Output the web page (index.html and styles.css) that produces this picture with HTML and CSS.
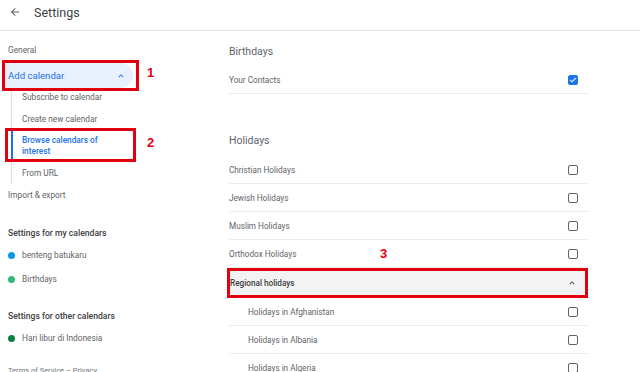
FILE: index.html
```html
<!DOCTYPE html>
<html>
<head>
<meta charset="utf-8">
<link rel="stylesheet" href="styles.css">
</head>
<body>
<header class="topbar">
  <svg class="back" width="12" height="12" viewBox="0 0 24 24"><path d="M20 11H7.83l5.59-5.59L12 4l-8 8 8 8 1.41-1.41L7.83 13H20v-2z" fill="#5f6368"/></svg>
  <span class="title">Settings</span>
</header>
<div class="main">
  <nav class="sidebar">
    <div class="nav-item">General</div>
    <div class="nav-group">
      <div class="nav-item active-group">
        <span>Add calendar</span>
        <svg class="chev" width="10" height="10" viewBox="0 0 24 24"><path d="M7.41 15.41L12 10.83l4.59 4.58L18 14l-6-6-6 6z" fill="#1a73e8"/></svg>
        <div class="annot box1"></div>
        <span class="num n1">1</span>
      </div>
      <div class="sub-list">
        <div class="sub-item">Subscribe to calendar</div>
        <div class="sub-item">Create new calendar</div>
        <div class="sub-item current">Browse calendars of<br>interest
          <div class="annot box2"></div>
          <span class="num n2">2</span>
        </div>
        <div class="sub-item">From URL</div>
      </div>
    </div>
    <div class="nav-item">Import &amp; export</div>
    <div class="nav-head first">Settings for my calendars</div>
    <div class="cal-item"><span class="dot" style="background:#039be5"></span>benteng batukaru</div>
    <div class="cal-item"><span class="dot" style="background:#33b679"></span>Birthdays</div>
    <div class="nav-head">Settings for other calendars</div>
    <div class="cal-item"><span class="dot" style="background:#0b8043"></span>Hari libur di Indonesia</div>
    <div class="foot">Terms of Service – Privacy</div>
  </nav>
  <section class="content">
    <h2 class="sec-title">Birthdays</h2>
    <div class="row"><span>Your Contacts</span><span class="cb checked"><svg width="8" height="8" viewBox="0 0 24 24"><path d="M9 16.2L4.8 12l-1.4 1.4L9 19 21 7l-1.4-1.4L9 16.2z" fill="#fff" stroke="#fff" stroke-width="1.5"/></svg></span></div>
    <h2 class="sec-title holidays">Holidays</h2>
    <div class="row"><span>Christian Holidays</span><span class="cb"></span></div>
    <div class="row"><span>Jewish Holidays</span><span class="cb"></span></div>
    <div class="row"><span>Muslim Holidays</span><span class="cb"></span></div>
    <div class="row"><span>Orthodox Holidays</span><span class="cb"></span><span class="num n3">3</span></div>
    <div class="row regional"><span>Regional holidays</span>
      <svg class="chev" width="10" height="10" viewBox="0 0 24 24"><path d="M7.41 15.41L12 10.83l4.59 4.58L18 14l-6-6-6 6z" fill="#3c4043"/></svg>
    </div>
    <div class="row subrow"><span>Holidays in Afghanistan</span><span class="cb"></span></div>
    <div class="row subrow"><span>Holidays in Albania</span><span class="cb"></span></div>
    <div class="row subrow"><span>Holidays in Algeria</span><span class="cb"></span></div>
  </section>
</div>
</body>
</html>
```
FILE: styles.css
```css
* { box-sizing: border-box; }
html, body { margin: 0; padding: 0; }
body {
  width: 640px;
  height: 372px;
  overflow: hidden;
  background: #fff;
  font-family: Roboto, "Liberation Sans", Arial, sans-serif;
  color: #3c4043;
}
.topbar {
  height: 31px;
  border-bottom: 1px solid #e6e6e6;
  display: flex;
  align-items: center;
  padding-left: 9px;
  padding-bottom: 6px;
}
.back { margin-right: 13px; }
.title { font-size: 12.5px; color: #3c4043; }
.main { display: flex; }
.sidebar {
  width: 205px;
  flex: none;
  font-size: 8.3px;
  color: #5f6368;
  padding-top: 8px;
}
.nav-item {
  height: 22px;
  line-height: 22px;
  padding-left: 8px;
  position: relative;
}
.nav-group { margin-top: 2px; }
.active-group {
  height: 25px;
  line-height: 25px;
  width: 130px;
  margin-left: 3px;
  padding-left: 5px;
  background: #e8f0fe;
  color: #1a73e8;
  font-size: 9.6px;
  border-radius: 0 13px 13px 0;
  display: flex;
  align-items: center;
  justify-content: space-between;
  padding-right: 7px;
}
.active-group .chev { flex: none; }
.sub-list {
  margin-left: 11px;
  margin-top: -2px;
  border-left: 1px solid #e0e0e0;
}
.sub-item {
  position: relative;
  padding: 5.5px 0 5.5px 10px;
  line-height: 11px;
}
.sub-item.current {
  color: #1a73e8;
  font-weight: 500;
  box-shadow: inset 2px 0 0 #1a73e8;
  margin-left: -1px;
  padding-left: 11px;
  padding-top: 5px;
  padding-bottom: 5px;
}
.nav-head {
  padding-left: 8px;
  color: #3c4043;
  font-weight: 500;
  font-size: 8.6px;
  margin-top: 14px;
  height: 22px;
  line-height: 22px;
}
.nav-head.first { margin-top: 16px; }
.cal-item {
  height: 23.5px;
  line-height: 23.5px;
  padding-left: 8px;
  display: flex;
  align-items: center;
}
.dot {
  width: 7px;
  height: 7px;
  border-radius: 50%;
  margin-right: 7px;
  flex: none;
}
.foot {
  margin-top: 15px;
  font-size: 7.5px;
  line-height: 10px;
  padding-left: 8px;
  color: #70757a;
}
.annot {
  position: absolute;
  border: 3px solid #e0000f;
  pointer-events: none;
}
.box1 { left: -1px; top: -3px; width: 137px; height: 31px; }
.box2 { left: -6px; top: -2px; width: 131px; height: 34px; }
.num {
  position: absolute;
  color: #e0000f;
  font-family: "Liberation Sans", Arial, sans-serif;
  font-weight: bold;
  font-size: 13px;
  line-height: 13px;
}
.n1 { left: 144px; top: 3px; }
.n2 { left: 136px; top: 6px; }
.n3 { left: 151px; top: 7px; }
.content {
  width: 359px;
  margin-left: 24px;
  padding-top: 12px;
}
.sec-title {
  margin: 0;
  font-size: 10.5px;
  font-weight: 400;
  color: #5f6368;
  height: 18px;
  line-height: 18px;
}
.holidays { margin-top: 38px; }
.row {
  position: relative;
  height: 28px;
  display: flex;
  align-items: center;
  justify-content: space-between;
  border-bottom: 1.5px solid #ececec;
  font-size: 8.2px;
  color: #5f6368;
  padding-right: 10px;
}
.sec-title + .row { margin-top: 5px; }
.cb {
  width: 10px;
  height: 10px;
  border: 1.5px solid #5f6368;
  border-radius: 2px;
  display: flex;
  align-items: center;
  justify-content: center;
}
.cb.checked { background: #1a73e8; border-color: #1a73e8; }
.regional {
  height: 30px;
  background: #f3f3f3;
  color: #3c4043;
  font-weight: 500;
  border: 3px solid #e0000f;
  margin-left: -2px;
  padding-left: 0;
  padding-right: 8px;
}
.holidays + .row { margin-top: 6px; }
.subrow { padding-left: 19px; }
```
